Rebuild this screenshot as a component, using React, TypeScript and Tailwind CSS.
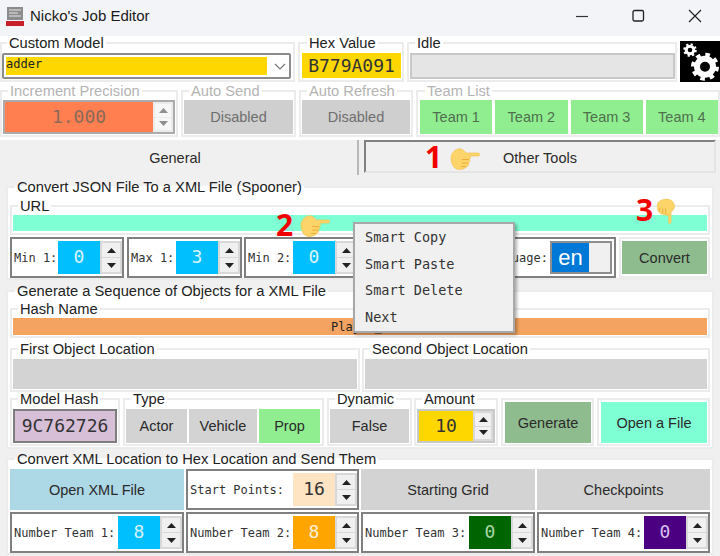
import type { ReactNode } from "react";

const ui = "font-['Liberation_Sans',sans-serif]";
const mono = "font-['DejaVu_Sans_Mono',monospace]";

function Group({
  label,
  className = "",
  muted = false,
  children,
}: {
  label: string;
  className?: string;
  muted?: boolean;
  children?: ReactNode;
}) {
  return (
    <fieldset className={`min-w-0 border-2 border-[#ececec] bg-white ${className}`}>
      <legend
        className={`ml-[5px] h-[14px] px-[2px] text-[14.7px] leading-[14px] ${muted ? "text-[#b4b4b4]" : "text-[#222]"}`}
      >
        {label}
      </legend>
      {children}
    </fieldset>
  );
}

function Arrow({ up }: { up?: boolean }) {
  return (
    <span className="flex flex-1 items-center justify-center bg-[#f0f0f0]">
      <svg width="9" height="5" viewBox="0 0 9 5">
        <path d={up ? "M4.5 0 9 5H0z" : "M0 0h9L4.5 5z"} fill={"#222"} />
      </svg>
    </span>
  );
}

function Spin({ muted = false, className = "w-[20px]" }: { muted?: boolean; className?: string }) {
  return (
    <span className={`flex shrink-0 flex-col gap-[1px] self-stretch bg-[#d8d8d8] p-[2px] ${className} ${muted ? "opacity-50" : ""}`}>
      <Arrow up />
      <Arrow />
    </span>
  );
}

function NumBox({
  label,
  value,
  bg,
  fg,
  className = "",
}: {
  label: string;
  value: string;
  bg: string;
  fg: string;
  className?: string;
}) {
  return (
    <div className={`flex h-[41px] items-center border-2 border-[#808080] bg-white pl-[2px] ${className}`}>
      <span className={`${mono} flex-1 whitespace-nowrap pt-[1px] text-[12px] text-[#333]`}>{label}</span>
      <span className="flex h-[33px] items-center">
        <span className={`${mono} ${bg} ${fg} flex h-full w-[42px] items-center justify-center pb-[3px] text-[18px]`}>
          {value}
        </span>
        <Spin className="w-[22px]" />
      </span>
    </div>
  );
}

function Btn({
  children,
  className = "",
}: {
  children: ReactNode;
  className?: string;
}) {
  return (
    <div className={`flex items-center justify-center pt-[2px] text-[14.5px] text-[#2a2a2a] ${className}`}>{children}</div>
  );
}

function Hand({ dir, className = "" }: { dir: "right" | "down"; className?: string }) {
  return (
    <svg
      viewBox="0 0 30 22"
      width="30"
      height="22"
      className={`absolute ${dir === "down" ? "rotate-90 scale-[0.85]" : ""} ${className}`}
    >
      <path
        d="M1 10C1 6 4 2 8 1c3-1 6 1 8 4h12.500c1.500 0 1.500 3 0 3H20c1 1 .500 3-.500 3.500.500 1 0 3-1 3.500.500 1 0 3-1.500 3.500C16 20 13 21.500 9 21.500 4 21.500 1 16 1 10z"
        fill="#fdd469"
        stroke="#f4bd4a"
        strokeWidth="0.6"
      />
      <path d="M12 11.500h7M12 15h6M11 18.500h5" stroke="#eda92f" strokeWidth="0.9" fill="none" />
    </svg>
  );
}

function Marker({ n, className }: { n: string; className: string }) {
  return (
    <span className={`absolute font-['Noto_Sans',sans-serif] text-[30px] leading-none font-bold text-[#f00000] ${className}`}>
      {n}
    </span>
  );
}

export default function App() {
  return (
    <div className={`${ui} relative h-[556px] w-[720px] overflow-hidden bg-white`}>
      {/* title bar */}
      <div className="flex h-[36px] items-center bg-[#f3f4f8] pb-[4px] pl-[6px]">
        <svg width="19" height="20" viewBox="0 0 19 20">
          <rect x="1" y="1" width="16" height="13" fill="#8c8c8c" />
          <path d="M3 4h12M3 7h9M3 10h12" stroke="#e6e6e6" strokeWidth="1" />
          <rect x="0" y="15" width="18" height="5" fill="#c8202a" />
        </svg>
        <span className="ml-[5px] text-[15px] text-[#1a1a1a]">Nicko's Job Editor</span>
        <div className="ml-auto flex items-center">
          <svg width="56" height="14" viewBox="0 0 56 14">
            <path d="M0 7.500h12" stroke="#333" strokeWidth="1.200" />
          </svg>
          <svg width="56" height="14" viewBox="0 0 56 14">
            <rect x="1" y="1.500" width="10.500" height="10.500" rx="1.500" fill="none" stroke="#222" strokeWidth="1.300" />
          </svg>
          <svg width="32" height="14" viewBox="0 0 32 14">
            <path d="M1 1l12 12M13 1L1 13" stroke="#222" strokeWidth="1.200" />
          </svg>
        </div>
      </div>

      {/* top row */}
      <div className="flex h-[46px] gap-[3px]">
        <Group label="Custom Model" className="w-[295px] pr-[2px]">
          <div className="mt-[3px] flex h-[26px] items-center rounded-[2px] border-2 border-[#8c8c8c] bg-white pl-[2px]">
            <span className={`${mono} h-[18px] w-[261px] bg-[#ffd700] text-[12px] leading-[15px] text-[#222]`}>adder</span>
            <svg width="12" height="7" viewBox="0 0 12 7" className="ml-[7px]">
              <path d="M1 1l5 5 5-5" fill="none" stroke="#777" strokeWidth="1.200" />
            </svg>
          </div>
        </Group>
        <Group label="Hex Value" className="w-[106px] pl-[2px] pr-[1px]">
          <div className={`${mono} mt-[3px] flex h-[25px] items-center justify-center bg-[#ffd700] text-[18px] text-[#333]`}>
            B779A091
          </div>
        </Group>
        <Group label="Idle" className="w-[270px] pl-[1px]">
          <div className="mt-[3px] h-[26px] border-2 border-[#c8c8c8] bg-[#e5e5e5]" />
        </Group>
        <div className="h-[41px] w-[40px] self-end bg-black">
          <svg width="40" height="41" viewBox="0 0 40 41">
            <circle cx="25" cy="25.700" r="8" fill="none" stroke="#fff" strokeWidth="6" />
            <circle cx="25" cy="25.700" r="12" fill="none" stroke="#fff" strokeWidth="4" strokeDasharray="4.500 4.920" />
            <circle cx="10" cy="9" r="3.800" fill="none" stroke="#fff" strokeWidth="3" />
            <circle cx="10" cy="9" r="5.800" fill="none" stroke="#fff" strokeWidth="2" strokeDasharray="2.200 2.350" />
          </svg>
        </div>
      </div>

      {/* second row */}
      <div className="mt-[2px] flex h-[53px] gap-[3px]">
        <Group label="Increment Precision" muted className="w-[178px] pl-[1px] pr-[1px]">
          <div className="mt-[2px] flex h-[34px] border-2 border-[#ababab]">
            <div className={`${mono} flex w-[152px] items-center justify-center bg-[#ff7f50] pb-[2px] text-[18px] text-[#8a6a5a]`}>
              1.000
            </div>
            <Spin muted />
          </div>
        </Group>
        <Group label="Auto Send" muted className="w-[115px] pl-[1px] pr-[1px]">
          <Btn className="mt-[2px] h-[34px] bg-[#cfcfcf] text-[#6e6e6e]">Disabled</Btn>
        </Group>
        <Group label="Auto Refresh" muted className="w-[114px] pl-[1px] pr-[1px]">
          <Btn className="mt-[2px] h-[34px] bg-[#cfcfcf] text-[#6e6e6e]">Disabled</Btn>
        </Group>
        <Group label="Team List" muted className="w-[304px] pl-[2px]">
          <div className="mt-[2px] grid h-[34px] grid-cols-4 gap-[3px]">
            {["Team 1", "Team 2", "Team 3", "Team 4"].map((t) => (
              <Btn key={t} className="bg-[#90ee90] text-[#4f6f4f]">{t}</Btn>
            ))}
          </div>
        </Group>
      </div>

      {/* tabs */}
      <div className="mt-[3px] flex h-[38px] bg-[#f0f0f0]">
        <Btn className="h-[35px] w-[350px]">General</Btn>
        <div className="ml-[7px] h-[35px] w-[2px] bg-[#b8b8b8]" />
        <Btn className="ml-[5px] h-[33px] w-[352px] border-2 border-t-[#808080] border-l-[#808080] border-r-[#e4e4e4] border-b-[#e4e4e4] !pt-[5px]">
          Other Tools
        </Btn>
      </div>

      {/* main panel */}
      <div className="flex h-[378px] flex-col bg-[#f0f0f0] px-[6px] pt-[2px]">
        <Group label="Convert JSON File To a XML File (Spooner)" className="h-[100px] w-[708px] px-[2px]">
          <Group label="URL" className="mt-[5px] h-[36px] w-[700px] px-[1px]">
            <div className="mt-[2px] h-[16px] bg-[#7fffd4]" />
          </Group>
          <div className="mt-[2px] flex h-[41px]">
            <NumBox label="Min 1:" value="0" bg="bg-[#00bfff]" fg="text-[#d8f4ff]" className="w-[114px]" />
            <NumBox label="Max 1:" value="3" bg="bg-[#00bfff]" fg="text-[#d8f4ff]" className="ml-[3px] w-[115px]" />
            <NumBox label="Min 2:" value="0" bg="bg-[#00bfff]" fg="text-[#d8f4ff]" className="ml-[2px] w-[115px]" />
            <div className="ml-[3px] flex h-[41px] w-[254px] items-center justify-end border-2 border-[#808080] bg-white pr-[2px]">
              <span className={`${mono} text-[12px] text-[#333]`}>Language:</span>
              <span className="ml-[2px] flex h-[33px] w-[62px] items-center border-2 border-[#8e8e8e] bg-[#f0f0f0]">
                <span className="flex h-[29px] w-[37px] items-center justify-center bg-[#0078d7] text-[22px] text-white">en</span>
              </span>
            </div>
            <div className="ml-[3px] flex h-[41px] w-[91px] items-center border-2 border-[#ececec] bg-white pl-[1px] pr-[1px]">
              <Btn className="h-[33px] w-full bg-[#8fbc8f]">Convert</Btn>
            </div>
          </div>
        </Group>

        <Group label="Generate a Sequence of Objects for a XML File" className="mt-[4px] h-[165px] w-[708px] px-[2px]">
          <Group label="Hash Name" className="mt-[4px] h-[36px] w-[700px] px-[1px]">
            <div className={`${mono} mt-[2px] flex h-[17px] items-center justify-center bg-[#f4a460] text-[12px] text-[#222]`}>
              Player_0
            </div>
          </Group>
          <div className="mt-[4px] flex h-[50px] gap-[2px]">
            <Group label="First Object Location" className="w-[350px] px-[1px]">
              <div className="mt-[3px] h-[30px] bg-[#d3d3d3]" />
            </Group>
            <Group label="Second Object Location" className="w-[348px] px-[1px]">
              <div className="mt-[3px] h-[30px] bg-[#d3d3d3]" />
            </Group>
          </div>
          <div className="flex h-[54px] items-end">
            <Group label="Model Hash" className="h-[54px] w-[110px] px-[1px]">
              <div className={`${mono} mt-[3px] flex h-[34px] items-center justify-center border-2 border-[#7e7e7e] bg-[#d8bfd8] pb-[2px] text-[18px] text-[#333]`}>
                9C762726
              </div>
            </Group>
            <Group label="Type" className="ml-[3px] h-[54px] w-[201px] px-[1px]">
              <div className="mt-[3px] flex h-[34px] gap-[2px]">
                <Btn className="w-[61px] bg-[#d3d3d3]">Actor</Btn>
                <Btn className="w-[68px] bg-[#d3d3d3]">Vehicle</Btn>
                <Btn className="w-[61px] bg-[#90ee90]">Prop</Btn>
              </div>
            </Group>
            <Group label="Dynamic" className="ml-[3px] h-[54px] w-[85px] px-[1px]">
              <Btn className="mt-[3px] h-[34px] bg-[#d3d3d3]">False</Btn>
            </Group>
            <Group label="Amount" className="ml-[2px] h-[54px] w-[84px] px-[1px]">
              <div className="mt-[3px] flex h-[34px] border-2 border-[#c8c8c8]">
                <div className={`${mono} flex w-[56px] items-center justify-center bg-[#ffd700] pb-[2px] text-[18px] text-[#333]`}>10</div>
                <Spin />
              </div>
            </Group>
            <div className="ml-[3px] h-[48px] w-[93px] border-2 border-[#ececec] pb-[1px] pl-[2px] pr-[1px] pt-[2px]">
              <Btn className="h-full bg-[#8fbc8f]">Generate</Btn>
            </div>
            <div className="ml-[3px] h-[48px] w-[113px] border-2 border-[#ececec] pb-[1px] pl-[2px] pr-[1px] pt-[2px]">
              <Btn className="h-full bg-[#7fffd4]">Open a File</Btn>
            </div>
          </div>
        </Group>

        <Group label="Convert XML Location to Hex Location and Send Them" className="mt-[3px] h-[103px] w-[708px] px-[2px]">
          <div className="mt-[3px] grid grid-cols-[174px_173px_174px_173px] gap-[2px]">
            <Btn className="h-[41px] bg-[#add8e6]">Open XML File</Btn>
            <NumBox label="Start Points:" value="16" bg="bg-[#ffe4c4]" fg="text-[#333]" />
            <Btn className="h-[41px] bg-[#d3d3d3]">Starting Grid</Btn>
            <Btn className="h-[41px] bg-[#d3d3d3]">Checkpoints</Btn>
            <NumBox label="Number Team 1:" value="8" bg="bg-[#00bfff]" fg="text-[#d8f4ff]" />
            <NumBox label="Number Team 2:" value="8" bg="bg-[#ffa500]" fg="text-[#fff0d8]" />
            <NumBox label="Number Team 3:" value="0" bg="bg-[#006400]" fg="text-[#a8d8a8]" />
            <NumBox label="Number Team 4:" value="0" bg="bg-[#4b0082]" fg="text-[#d8c0f0]" />
          </div>
        </Group>
      </div>

      {/* context menu */}
      <div className={`${mono} absolute left-[353px] top-[222px] flex h-[111px] w-[162px] flex-col border-2 border-[#a8a8a8] bg-[#f0f0f0] pl-[10px] text-[13.500px] leading-[26.600px] text-[#333] shadow-[2px_2px_3px_rgba(0,0,0,0.3)]`}>
        <span>Smart Copy</span>
        <span>Smart Paste</span>
        <span>Smart Delete</span>
        <span>Next</span>
      </div>

      {/* annotations */}
      <Marker n="1" className="left-[425px] top-[142px]" />
      <Hand dir="right" className="left-[450px] top-[148px]" />
      <Marker n="2" className="left-[276px] top-[210px]" />
      <Hand dir="right" className="left-[300px] top-[215px]" />
      <Marker n="3" className="left-[636px] top-[195px]" />
      <Hand dir="down" className="left-[651px] top-[200px]" />
    </div>
  );
}
